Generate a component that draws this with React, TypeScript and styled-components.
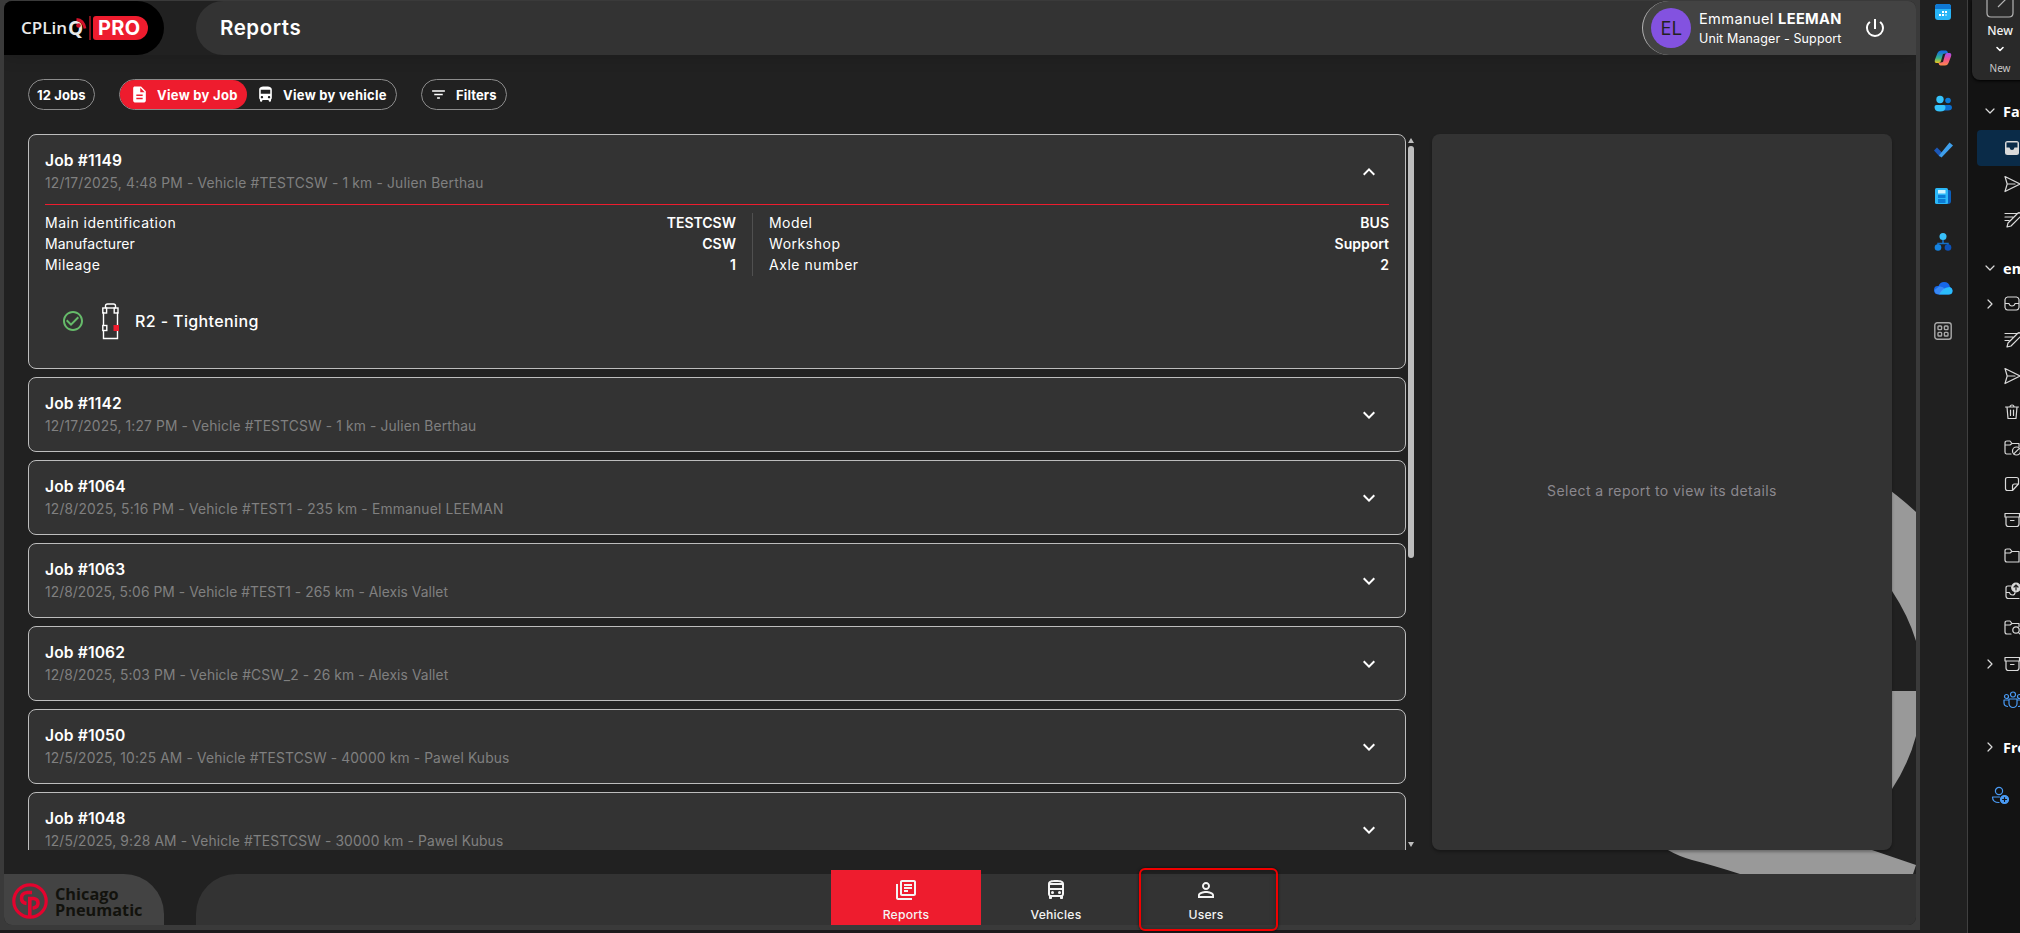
import React from "react";
import styled, { createGlobalStyle, css } from "styled-components";
import {
  MdDescription,
  MdDirectionsBus,
  MdFilterList,
  MdCheckCircleOutline,
  MdOutlineLibraryBooks,
  MdOutlineDirectionsBus,
  MdPersonOutline,
  MdPowerSettingsNew,
  MdExpandMore,
  MdExpandLess,
} from "react-icons/md";

const RED = "#ee1c2e";
const PANEL = "#333333";

const GlobalStyle = createGlobalStyle`
  *, *::before, *::after { box-sizing: border-box; }
  html, body { margin: 0; padding: 0; background: #1c1a1c; overflow: hidden; }
  body { font-family: Inter, "Open Sans", sans-serif; color: #fff; font-size: 14px; }
`;

/* ---------- frame ---------- */

const Desktop = styled.div`
  display: flex;
  width: 2020px;
  height: 933px;
  overflow: hidden;
`;

const WindowFrame = styled.div`
  flex: none;
  width: 1920px;
  height: 930px;
  padding: 1px 4px 5px 4px;
  background: #3a3a3a;
`;

const Window = styled.div`
  position: relative;
  display: flex;
  flex-direction: column;
  height: 924px;
  border-radius: 8px;
  overflow: hidden;
  background: #212121;
`;

const Watermark = styled.svg`
  position: absolute;
  right: 0;
  top: 479px;
  width: 252px;
  height: 394px;
`;

/* ---------- header ---------- */

const Header = styled.header`
  flex: none;
  display: flex;
  justify-content: space-between;
  height: 54px;
  box-shadow: 0 4px 14px rgba(0, 0, 0, 0.12);
`;

const Brand = styled.div`
  display: flex;
  align-items: center;
  width: 160px;
  padding-left: 17px;
  background: #000;
  border-radius: 0 27px 27px 0;
`;

const BrandName = styled.span`
  display: flex;
  align-items: center;
  font: 600 17px/24px "Open Sans", sans-serif;
  width: 62px;
  color: #e9e9e9;
`;

const BrandInitial = styled.span`
  margin-left: 1px;
  font-size: 19px;
  font-weight: 700;
`;

const BrandRule = styled.span`
  width: 2px;
  height: 24px;
  margin: 0 2px 0 6px;
  background: #7d1119;
`;

const BrandBadge = styled.span`
  width: 55px;
  height: 24px;
  padding-left: 5px;
  border-radius: 3px 12px 12px 3px;
  background: ${RED};
  font-weight: 700;
  font-size: 20px;
  line-height: 24px;
  letter-spacing: 0.3px;
`;

const BrandArc = styled.svg`
  position: absolute;
  left: 70px;
  top: 16px;
  width: 13px;
  height: 13px;
`;

const TitleBar = styled.div`
  display: flex;
  justify-content: space-between;
  align-items: center;
  width: 1720px;
  padding-left: 24px;
  background: ${PANEL};
  border-radius: 27px 0 0 27px;
`;

const Title = styled.h1`
  margin: 0;
  font-size: 20.5px;
  font-weight: 600;
  line-height: 54px;
  letter-spacing: 0.55px;
`;

const Profile = styled.div`
  display: flex;
  align-items: center;
  width: 274px;
  height: 54px;
  padding-left: 8px;
  border-left: 1px solid #b5b5b5;
  border-radius: 27px 0 0 27px;
  background: #434343;
`;

const Avatar = styled.div`
  flex: none;
  width: 40px;
  height: 40px;
  border-radius: 50%;
  background: #8352e0;
  color: #212121;
  font: 400 20px/40px "Open Sans", sans-serif;
  text-align: center;
`;

const ProfileText = styled.div`
  width: 164px;
  margin-left: 8px;
  padding-top: 2px;
  line-height: 20px;
  white-space: nowrap;
`;

const ProfileName = styled.div`
  font-size: 14.6px;
  letter-spacing: 0.35px;
  b { font-weight: 700; }
`;

const ProfileRole = styled.div`
  font-size: 12.5px;
  letter-spacing: 0.13px;
`;

/* ---------- toolbar ---------- */

const Main = styled.main`
  position: relative;
  flex: 1;
  display: flex;
  flex-direction: column;
  min-height: 0;
  padding: 24px 24px 0;
`;

const Toolbar = styled.div`
  display: flex;
  gap: 24px;
  height: 31px;
`;

const pill = css`
  display: flex;
  align-items: center;
  height: 31px;
  border: 1px solid #8c8c8c;
  border-radius: 16px;
  font-size: 13px;
  font-weight: 700;
  white-space: nowrap;
`;

const Pill = styled.div<{ $w: number }>`
  ${pill}
  width: ${(p) => p.$w}px;
  padding-left: 8px;
  letter-spacing: 0.12px;
  svg { margin-right: 9px; }
`;

const Toggle = styled.div`
  ${pill}
  width: 278px;
  letter-spacing: 0.28px;
`;

const ToggleItem = styled.div<{ $active?: boolean }>`
  display: flex;
  align-items: center;
  gap: 8px;
  height: 29px;
  width: ${(p) => (p.$active ? 127 : 149)}px;
  padding-left: ${(p) => (p.$active ? 10 : 9)}px;
  border-radius: 15px;
  background: ${(p) => (p.$active ? RED : "transparent")};
`;

/* ---------- job list ---------- */

const Content = styled.div`
  display: flex;
  height: 716px;
  margin-top: 24px;
`;

const JobList = styled.div`
  display: flex;
  flex-direction: column;
  gap: 8px;
  width: 1378px;
  overflow: hidden;
`;

const Card = styled.article<{ $open?: boolean }>`
  flex: none;
  height: ${(p) => (p.$open ? 235 : 75)}px;
  padding: 16px 16px 0;
  border: 1px solid #bdbdbd;
  border-radius: 8px;
  background: ${PANEL};
`;

const CardHead = styled.div<{ $open?: boolean }>`
  display: flex;
  justify-content: space-between;
  align-items: center;
  height: ${(p) => (p.$open ? 54 : 42)}px;
  padding: 0 8px ${(p) => (p.$open ? 12 : 0)}px 0;
  border-bottom: ${(p) => (p.$open ? `1px solid ${RED}` : "none")};
`;

const JobTitle = styled.div`
  font-size: 15.6px;
  font-weight: 600;
  line-height: 22px;
  letter-spacing: 0.14px;
`;

const JobMeta = styled.div<{ $track: number }>`
  font-size: 13.8px;
  line-height: 22px;
  letter-spacing: ${(p) => p.$track}px;
  color: #808080;
`;

const Facts = styled.div`
  display: flex;
  margin-top: 8px;
`;

const FactColumn = styled.dl<{ $first?: boolean }>`
  margin: 0;
  width: ${(p) => (p.$first ? 708 : 636)}px;
  padding: ${(p) => (p.$first ? "0 16px 0 0" : "0 0 0 16px")};
  border-right: ${(p) => (p.$first ? "1px solid #505050" : "none")};
`;

const Fact = styled.div<{ $track: number }>`
  display: flex;
  justify-content: space-between;
  height: 21px;
  line-height: 20px;
  font-size: 14px;
  dt { letter-spacing: ${(p) => p.$track}px; }
  dd { margin: 0; font-weight: 600; }
`;

const Operation = styled.div`
  display: flex;
  align-items: center;
  height: 40px;
  margin-top: 25px;
  padding-left: 16px;
  font-size: 16px;
  font-weight: 500;
  letter-spacing: 0.38px;
`;

const Truck = styled.svg`
  margin: 0 16px 0 17px;
`;

const Scrollbar = styled.div`
  display: flex;
  flex-direction: column;
  justify-content: space-between;
  align-items: center;
  width: 6px;
  margin: 4px 18px 3px 2px;
`;

const ScrollThumb = styled.div`
  width: 6px;
  height: 412px;
  margin: 3px 0 auto;
  border-radius: 3px;
  background: #bdbdbd;
`;

const Details = styled.section`
  width: 460px;
  padding-bottom: 3px;
  border-radius: 8px;
  background: ${PANEL};
  box-shadow: 0 2px 3px rgba(0, 0, 0, 0.3);
  display: flex;
  justify-content: center;
  align-items: center;
  color: #8b888e;
  font-size: 14px;
  letter-spacing: 0.42px;
`;

/* ---------- footer ---------- */

const Footer = styled.footer`
  position: relative;
  flex: none;
  display: flex;
  justify-content: space-between;
  height: 51px;
`;

const Company = styled.div`
  display: flex;
  gap: 7px;
  width: 160px;
  padding: 9px 0 0 8px;
  background: #434343;
  border-radius: 0 40px 0 0;
`;

const CompanyName = styled.div`
  padding-top: 3px;
  font: 700 16.3px/16px "Open Sans", sans-serif;
  color: #12120d;
`;

const Nav = styled.nav`
  display: flex;
  width: 1720px;
  padding-left: 635px;
  background: ${PANEL};
  border-radius: 40px 0 0 0;
`;

const NavItem = styled.a<{ $active?: boolean }>`
  display: flex;
  flex-direction: column;
  align-items: center;
  width: 150px;
  height: 55px;
  margin-top: -4px;
  padding-top: 8px;
  background: ${(p) => (p.$active ? RED : "transparent")};
  color: #f4f4f4;
  font-size: 12.2px;
  font-weight: 500;
  line-height: 17px;
  letter-spacing: 0.2px;
  svg { margin-bottom: 4px; }
`;

const Highlight = styled.div`
  position: absolute;
  left: 1139px;
  top: 868px;
  width: 139px;
  height: 63px;
  border: 2px solid #f00000;
  border-radius: 6px;
  box-shadow: 0 0 3px rgba(0, 0, 0, 0.7), inset 0 0 6px rgba(0, 0, 0, 0.3);
`;

/* ---------- mail client ---------- */

const AppRail = styled.aside`
  flex: none;
  display: flex;
  flex-direction: column;
  align-items: center;
  gap: 28px;
  width: 48px;
  padding: 3px 2px 0 0;
  border-right: 1px solid #404040;
  background: #202020;
  svg { flex: none; }
  svg:last-child { margin-top: -3px; }
`;

const Mail = styled.aside`
  flex: none;
  width: 52px;
  overflow: hidden;
  background: #131313;
  font-family: "Noto Sans", sans-serif;
`;

const Ribbon = styled.div`
  display: flex;
  flex-direction: column;
  align-items: center;
  width: 56px;
  height: 80px;
  margin-left: 4px;
  border-radius: 0 0 0 8px;
  background: #292929;
  box-shadow: 0 1px 3px #000;
`;

const RibbonLabel = styled.div<{ $caption?: boolean }>`
  font-size: ${(p) => (p.$caption ? 10 : 12)}px;
  font-weight: ${(p) => (p.$caption ? 400 : 500)};
  line-height: 18px;
  margin: ${(p) => (p.$caption ? 6 : 4)}px 0 ${(p) => (p.$caption ? 0 : 5)}px;
  color: ${(p) => (p.$caption ? "#c8c8c8" : "#f2f2f2")};
`;

const FolderRow = styled.div<{ $selected?: boolean; $gap?: number; $blue?: boolean }>`
  display: flex;
  align-items: center;
  height: 36px;
  width: 80px;
  margin: ${(p) => p.$gap ?? 0}px 0 0 9px;
  border-radius: 4px;
  background: ${(p) => (p.$selected ? "#0a2b48" : "transparent")};
  color: ${(p) => (p.$blue ? "#4a9bf5" : "#dadada")};
  font-size: 14.5px;
  font-weight: 700;
  white-space: nowrap;
  svg { flex: none; }
`;

const ArrowSlot = styled.span`
  flex: none;
  display: flex;
  justify-content: center;
  width: 26px;
`;

const Group = styled.span`
  color: #fff;
`;

/* ---------- drawings ---------- */

const line = { fill: "none", stroke: "currentColor", strokeWidth: 1.2, strokeLinejoin: "round", strokeLinecap: "round" } as const;

const Arrow = ({ down }: { down?: boolean }) => (
  <svg width="12" height="12" viewBox="0 0 12 12" {...line}>
    <path d={down ? "M2 4l4 4 4-4" : "M4 2l4 4-4 4"} />
  </svg>
);

const folderShapes: Record<string, React.ReactNode> = {
  inboxFilled: (
    <>
      <rect x="2" y="2" width="14" height="14" rx="2.5" fill="currentColor" stroke="none" />
      <path d="M3.5 3.5h11v5h-3q-.5 2.500-2.500 2.500T6.500 8.500h-3z" fill="#0a2b48" stroke="none" />
    </>
  ),
  inbox: <path d="M4.500 2h9a3 3 0 0 1 2.500 2.500v8a3 3 0 0 1-2.500 2.500h-9a3 3 0 0 1-2.500-2.500v-8a3 3 0 0 1 2.500-2.500zM2 8.500h4q.5 2.500 3 2.500t3-2.500h4" />,
  send: <path d="M2 1.500L17 9 2 16.500 4.200 9zM4.200 9H12" />,
  draft: <path d="M2 2.500h12M2 6h8M2 9.500h4M4 16l1-4L14.500 2.500a2 2 0 0 1 3 3L8 15z" />,
  trash: <path d="M2.500 4h13M4 4l1 11.500h8L14 4M7 4a2 2 0 0 1 4 0M7.500 7v5.500M10.500 7v5.500" />,
  blocked: (
    <>
      <path d="M8 15H3.500A2 2 0 0 1 2 13V4q0-2 2-2h3l2 2.500h7v3M2 6h5l2-1.500" />
      <circle cx="13.500" cy="12" r="4" />
      <path d="M10.800 14.800l5.500-5.500" />
    </>
  ),
  note: <path d="M4.500 2.500h9q2 0 2 2V9l-6 6.500h-5q-2 0-2-2v-9q0-2 2-2zM9.500 15.500V11q0-2 2-2h4" />,
  archive: <path d="M2 2.500h14.500v3.500H2zM3 6v7q0 2.500 2.500 2.500h8q2.500 0 2.500-2.500V6M7.500 9.500h3.500" />,
  folder: <path d="M2 4q0-2 2-2h3l2 2.500h7V15H4q-2 0-2-2zM2 6h5l2-1.500" />,
  upload: (
    <>
      <path d="M8 3H5Q3 3 3 5v8q0 2.500 2.500 2.500H16M3 9.500h3.500q.5 2.500 3 2.500T12 9.500" />
      <circle cx="13" cy="4.500" r="4.300" fill="#dadada" />
      <path d="M13 7V2M11 4l2-2 2 2" stroke="#222" />
    </>
  ),
  search: (
    <>
      <path d="M8 15H4q-2 0-2-2V4q0-2 2-2h3l2 2.500h7v3M2 6h5l2-1.500" />
      <circle cx="13" cy="11" r="3.200" />
      <path d="M15.300 13.300L18 16" />
    </>
  ),
  people: (
    <>
      <circle cx="3.500" cy="5.500" r="2" />
      <circle cx="10" cy="3.500" r="2.500" />
      <circle cx="16.500" cy="5.500" r="2" />
      <path d="M4.500 15.500Q1 15 1 12V9h4M6 8h8v4.500a4 4 0 0 1-8 0zM15.500 15.500Q19 15 19 12V9h-4" />
    </>
  ),
  personAdd: (
    <>
      <circle cx="8" cy="5" r="3.600" />
      <path d="M8 16.500Q1.500 16.500 1.500 11h7" />
      <circle cx="13.500" cy="13.500" r="4" fill="currentColor" />
      <path d="M13.500 11.500v4M11.500 13.500h4" stroke="#131313" />
    </>
  ),
};

const FolderIcon = ({ name }: { name: string }) => (
  <svg width="18" height="18" viewBox="0 0 18 18" overflow="visible" {...line}>
    {folderShapes[name]}
  </svg>
);

const railIcons: React.ReactNode[] = [
  <>
    <rect x="1" y="1" width="16" height="16" rx="3" fill="#27b4f7" />
    <path d="M1 6V4q0-3 3-3h10q3 0 3 3v2z" fill="#0f78d4" />
    <path d="M8 9h2M11 9h2M5 12h2M8 12h2" stroke="#fff" strokeWidth="1.800" />
    <path d="M11 12h2" stroke="#fff" strokeWidth="0.800" />
  </>,
  <>
    <path d="M7 1.500h5q1.500 0 2 2.500L9 5 7 12q-.7 2-2 2H2.500Q0 14 1 10.500L3.500 4Q4.500 1.500 7 1.500z" fill="url(#cpA)" />
    <path d="M11 16.500H6.500Q5 16.500 4.500 14L9 13l2-7q.7-2 2-2h2.500Q18 4 17 7.500L14.500 14q-1 2.500-3.500 2.500z" fill="url(#cpB)" />
  </>,
  <>
    <circle cx="6" cy="4.500" r="3.700" fill="#35c3fb" />
    <circle cx="14" cy="5.500" r="2.800" fill="#0b7bd8" />
    <path d="M9 10h7q2 0 2 2.500Q18 15.500 14 15.500H9z" fill="#0b6fd0" />
    <path d="M2.500 10h7q2 0 2 2 0 4.500-5.500 4.500T.5 12q0-2 2-2z" fill="#35c3fb" />
  </>,
  <>
    <path d="M0 9.500l3-3 6 6-3 3.500z" fill="#1b57b8" />
    <path d="M5 14.500L15.500 1.500 19 4.500 7.500 16.500z" fill="#3fa0ec" />
  </>,
  <>
    <path d="M12 3h3.500Q17 3 17 5v9q0 3-3 3h-2z" fill="#0b5fbd" />
    <rect x="1" y="1" width="13" height="16" rx="1.500" fill="#2bb8f8" />
    <rect x="4" y="3" width="7.500" height="3.500" fill="#cdf2ff" />
    <path d="M4 8h7.500v3H4zM4 12h7.500v4H4z" fill="#0c7cd6" />
  </>,
  <>
    <path d="M9 7v3M4 13v-2.500h10V13" fill="none" stroke="#1570c8" strokeWidth="1.500" />
    <circle cx="9" cy="3.500" r="3.500" fill="#38c0fa" />
    <circle cx="4" cy="14.500" r="3.300" fill="#1583e0" />
    <circle cx="14" cy="14.500" r="3.300" fill="#0c52b8" />
  </>,
  <>
    <path d="M5 15.500Q0 15.500 0 11T4.500 7Q6 3 10 3q5 0 6 5 2.500.8 2.500 3.800 0 3.700-4 3.700z" fill="#1767e8" />
    <path d="M5 15.500Q8 8.500 15.500 8q3 1 3 4 0 3.500-4 3.500z" fill="#2bbdfb" />
    <path d="M5 7.500Q9 7 11 10l-6 5.500Q.5 15 .5 11z" fill="#4f9ffc" opacity="0.600" />
  </>,
  <g fill="none" stroke="#a9a9a9" strokeWidth="1.400">
    <rect x="0.800" y="0.800" width="16.400" height="16.400" rx="2.500" />
    <rect x="4" y="4" width="3.600" height="3.600" rx="0.800" />
    <rect x="10.400" y="4" width="3.600" height="3.600" rx="0.800" />
    <rect x="4" y="10.400" width="3.600" height="3.600" rx="0.800" />
    <rect x="10.400" y="10.400" width="3.600" height="3.600" rx="0.800" />
  </g>,
];

const TruckIcon = () => (
  <Truck width="17" height="37" viewBox="0 0 17 37" fill="none" stroke="#fff" strokeWidth="1.400">
    <path d="M3.500 5V3q0-2 2-2h6q2 0 2 2v2" />
    <path d="M3.500 5h10" />
    <path d="M1.500 9v26.500h14V9" />
    <rect x="0.800" y="5" width="3.800" height="5" />
    <rect x="12.200" y="5" width="3.800" height="5" />
    <rect x="0.800" y="22.500" width="4" height="5" fill={PANEL} />
    <rect x="11.500" y="22" width="5.500" height="6" fill={RED} stroke="none" />
  </Truck>
);

const CompanyMark = () => (
  <svg width="36" height="36" viewBox="0 0 36 36" fill="none" stroke="#e4032e">
    <circle cx="18" cy="18" r="16.200" strokeWidth="3.200" />
    <path d="M20 9.500h-4.500Q9.500 10 9.500 15T14.500 20.500" strokeWidth="3.600" />
    <path d="M17.800 34V15.500h3.700Q26 16 26 20t-4.500 5H20.500" strokeWidth="3.600" />
  </svg>
);

/* ---------- data ---------- */

const jobs = [
  { id: "1142", meta: "12/17/2025, 1:27 PM - Vehicle #TESTCSW - 1 km - Julien Berthau", track: 0.145 },
  { id: "1064", meta: "12/8/2025, 5:16 PM - Vehicle #TEST1 - 235 km - Emmanuel LEEMAN", track: 0.2 },
  { id: "1063", meta: "12/8/2025, 5:06 PM - Vehicle #TEST1 - 265 km - Alexis Vallet", track: 0.065 },
  { id: "1062", meta: "12/8/2025, 5:03 PM - Vehicle #CSW_2 - 26 km - Alexis Vallet", track: 0.1 },
  { id: "1050", meta: "12/5/2025, 10:25 AM - Vehicle #TESTCSW - 40000 km - Pawel Kubus", track: 0.145 },
  { id: "1048", meta: "12/5/2025, 9:28 AM - Vehicle #TESTCSW - 30000 km - Pawel Kubus", track: 0.145 },
];

type FactItem = { label: string; value: string; track: number };

const factsLeft: FactItem[] = [
  { label: "Main identification", value: "TESTCSW", track: 0.5 },
  { label: "Manufacturer", value: "CSW", track: 0.05 },
  { label: "Mileage", value: "1", track: 0.45 },
];
const factsRight: FactItem[] = [
  { label: "Model", value: "BUS", track: 0.45 },
  { label: "Workshop", value: "Support", track: 0.55 },
  { label: "Axle number", value: "2", track: 0.55 },
];

const folders: { icon: string; arrow?: boolean; blue?: boolean }[] = [
  { icon: "inbox", arrow: true },
  { icon: "draft" },
  { icon: "send" },
  { icon: "trash" },
  { icon: "blocked" },
  { icon: "note" },
  { icon: "archive" },
  { icon: "folder" },
  { icon: "upload" },
  { icon: "search" },
  { icon: "archive", arrow: true },
  { icon: "people", blue: true },
];

const FactList = ({ items, first }: { items: FactItem[]; first?: boolean }) => (
  <FactColumn $first={first}>
    {items.map((item) => (
      <Fact key={item.label} $track={item.track}>
        <dt>{item.label}</dt>
        <dd>{item.value}</dd>
      </Fact>
    ))}
  </FactColumn>
);

export default function App() {
  return (
    <>
      <GlobalStyle />
      <Desktop>
        <WindowFrame>
          <Window>
            <Watermark viewBox="1664 480 252 394" fill="#999999">
              <path d="M1880 483Q1900 497 1916 512V641Q1908 615 1892 591L1880 576z" />
              <path d="M1880 691h36v45q-7 27-24 53l-12 14z" />
              <path d="M1668 850q10 6 24 10 20 5 48 14h173l3-9-44-15z" />
            </Watermark>
            <Header>
              <Brand>
                <BrandName>
                  CPLin<BrandInitial>Q</BrandInitial>
                </BrandName>
                <BrandArc viewBox="0 0 13 13" fill="none" stroke="#d3112a">
                  <path d="M2.500 2.500Q9.500 3 11 11.500" strokeWidth="2.800" />
                  <circle cx="4.500" cy="8.500" r="2.300" fill="#d3112a" stroke="none" />
                </BrandArc>
                <BrandRule />
                <BrandBadge>PRO</BrandBadge>
              </Brand>
              <TitleBar>
                <Title>Reports</Title>
                <Profile>
                  <Avatar>EL</Avatar>
                  <ProfileText>
                    <ProfileName>Emmanuel <b>LEEMAN</b></ProfileName>
                    <ProfileRole>Unit Manager - Support</ProfileRole>
                  </ProfileText>
                  <MdPowerSettingsNew size={24} />
                </Profile>
              </TitleBar>
            </Header>
            <Main>
              <Toolbar>
                <Pill $w={67}>12 Jobs</Pill>
                <Toggle>
                  <ToggleItem $active>
                    <MdDescription size={19} />
                    View by Job
                  </ToggleItem>
                  <ToggleItem>
                    <MdDirectionsBus size={19} />
                    View by vehicle
                  </ToggleItem>
                </Toggle>
                <Pill $w={86}>
                  <MdFilterList size={17} />
                  Filters
                </Pill>
              </Toolbar>
              <Content>
                <JobList>
                  <Card $open>
                    <CardHead $open>
                      <div>
                        <JobTitle>Job #1149</JobTitle>
                        <JobMeta $track={0.187}>12/17/2025, 4:48 PM - Vehicle #TESTCSW - 1 km - Julien Berthau</JobMeta>
                      </div>
                      <MdExpandLess size={24} />
                    </CardHead>
                    <Facts>
                      <FactList items={factsLeft} first />
                      <FactList items={factsRight} />
                    </Facts>
                    <Operation>
                      <MdCheckCircleOutline size={24} color="#66bb6a" />
                      <TruckIcon />
                      R2 - Tightening
                    </Operation>
                  </Card>
                  {jobs.map((job) => (
                    <Card key={job.id}>
                      <CardHead>
                        <div>
                          <JobTitle>Job #{job.id}</JobTitle>
                          <JobMeta $track={job.track}>{job.meta}</JobMeta>
                        </div>
                        <MdExpandMore size={24} />
                      </CardHead>
                    </Card>
                  ))}
                </JobList>
                <Scrollbar>
                  <svg width="6" height="5" viewBox="0 0 6 5"><path d="M0 5l3-5 3 5z" fill="#bdbdbd" /></svg>
                  <ScrollThumb />
                  <svg width="6" height="5" viewBox="0 0 6 5"><path d="M0 0l3 5 3-5z" fill="#bdbdbd" /></svg>
                </Scrollbar>
                <Details>Select a report to view its details</Details>
              </Content>
            </Main>
            <Footer>
              <Company>
                <CompanyMark />
                <CompanyName>
                  Chicago
                  <br />
                  Pneumatic
                </CompanyName>
              </Company>
              <Nav>
                <NavItem $active>
                  <MdOutlineLibraryBooks size={24} />
                  Reports
                </NavItem>
                <NavItem>
                  <MdOutlineDirectionsBus size={24} />
                  Vehicles
                </NavItem>
                <NavItem>
                  <MdPersonOutline size={24} />
                  Users
                </NavItem>
              </Nav>
            </Footer>
          </Window>
          <Highlight />
        </WindowFrame>
        <AppRail>
          {railIcons.map((shape, i) => (
            <svg key={i} width="18" height="18" viewBox="0 0 18 18" overflow="visible">
              <defs>
                <linearGradient id="cpA" x1="0" y1="0" x2="0" y2="1">
                  <stop offset="0.1" stopColor="#1670dd" />
                  <stop offset="0.6" stopColor="#35b58c" />
                  <stop offset="1" stopColor="#f0c419" />
                </linearGradient>
                <linearGradient id="cpB" x1="0" y1="0" x2="0" y2="1">
                  <stop offset="0" stopColor="#a64df0" />
                  <stop offset="0.5" stopColor="#f0508c" />
                  <stop offset="1" stopColor="#fd8a4a" />
                </linearGradient>
              </defs>
              {shape}
            </svg>
          ))}
        </AppRail>
        <Mail>
          <Ribbon>
            <svg width="28" height="18" viewBox="0 0 28 18" fill="none" stroke="#b5b5b5" strokeWidth="1.200">
              <path d="M1 0v13q0 4 4 4h18q4 0 4-4V0M12 7l8-8" />
            </svg>
            <RibbonLabel>New</RibbonLabel>
            <svg width="10" height="8" viewBox="0 0 10 8" {...line} strokeWidth="1.600">
              <path d="M2 2.500l3 3 3-3" />
            </svg>
            <RibbonLabel $caption>New</RibbonLabel>
          </Ribbon>
          <FolderRow $gap={13}>
            <ArrowSlot><Arrow down /></ArrowSlot>
            <Group>Favorites</Group>
          </FolderRow>
          <FolderRow $selected $gap={1}><ArrowSlot /><FolderIcon name="inboxFilled" /></FolderRow>
          <FolderRow><ArrowSlot /><FolderIcon name="send" /></FolderRow>
          <FolderRow><ArrowSlot /><FolderIcon name="draft" /></FolderRow>
          <FolderRow $gap={12}>
            <ArrowSlot><Arrow down /></ArrowSlot>
            <Group>emmanuel</Group>
          </FolderRow>
          {folders.map((f, i) => (
            <FolderRow key={i} $blue={f.blue}>
              <ArrowSlot>{f.arrow && <Arrow />}</ArrowSlot>
              <FolderIcon name={f.icon} />
            </FolderRow>
          ))}
          <FolderRow $gap={11}>
            <ArrowSlot><Arrow /></ArrowSlot>
            <Group>Frequent</Group>
          </FolderRow>
          <FolderRow $gap={12} $blue>
            <svg width="14" height="1" />
            <FolderIcon name="personAdd" />
          </FolderRow>
        </Mail>
      </Desktop>
    </>
  );
}
